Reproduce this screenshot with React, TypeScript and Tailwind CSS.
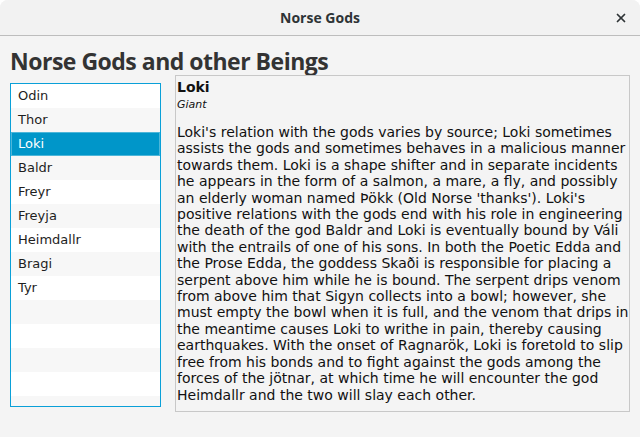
import { X } from 'lucide-react';

const gods = ['Odin', 'Thor', 'Loki', 'Baldr', 'Freyr', 'Freyja', 'Heimdallr', 'Bragi', 'Tyr'];

const lines = [
  "Loki's relation with the gods varies by source; Loki sometimes",
  'assists the gods and sometimes behaves in a malicious manner',
  'towards them. Loki is a shape shifter and in separate incidents',
  'he appears in the form of a salmon, a mare, a fly, and possibly',
  "an elderly woman named Þökk (Old Norse 'thanks'). Loki's",
  'positive relations with the gods end with his role in engineering',
  'the death of the god Baldr and Loki is eventually bound by Váli',
  'with the entrails of one of his sons. In both the Poetic Edda and',
  'the Prose Edda, the goddess Skaði is responsible for placing a',
  'serpent above him while he is bound. The serpent drips venom',
  'from above him that Sigyn collects into a bowl; however, she',
  'must empty the bowl when it is full, and the venom that drips in',
  'the meantime causes Loki to writhe in pain, thereby causing',
  'earthquakes. With the onset of Ragnarök, Loki is foretold to slip',
  'free from his bonds and to fight against the gods among the',
  'forces of the jötnar, at which time he will encounter the god',
  'Heimdallr and the two will slay each other.',
];

export default function App() {
  const rows = Array.from({ length: 14 }, (_, i) => gods[i] ?? '');

  return (
    <div className="w-[640px] h-[437px] bg-[#f4f4f4] rounded-t-[8px] overflow-hidden flex flex-col font-['DejaVu_Sans',sans-serif]">
      <div className="h-[36px] shrink-0 bg-[#f2f2f2] border-b border-[#bdbdbd] relative flex items-center justify-center">
        <span className="font-['Open_Sans',sans-serif] font-bold text-[14px] text-[#2e3436]">Norse Gods</span>
        <X className="absolute right-[12px] top-[11px] w-[14px] h-[14px] text-[#2e3436]" strokeWidth={3} />
      </div>

      <div className="px-[10px]">
        <div className="h-[39px] pt-[11px]">
          <h1 className="font-['Open_Sans',sans-serif] font-bold text-[23px] leading-[28px] text-[#333] tracking-[-0.5px]">
            Norse Gods and other Beings
          </h1>
        </div>

        <div className="flex items-start">
          <div className="mt-[8px] w-[151px] h-[324px] border border-[#0aa0d8] overflow-hidden">
            {rows.map((g, i) => {
              const selected = g === 'Loki';
              return (
                <div
                  key={i}
                  className={
                    selected
                      ? 'h-[24px] px-[6px] flex items-center text-[13px] text-white bg-[#0096c9] border border-[#4db6d9]'
                      : i % 2 === 1
                        ? 'h-[24px] px-[7px] flex items-center text-[13px] text-[#1e1e1e] bg-[#f7f7f7]'
                        : 'h-[24px] px-[7px] flex items-center text-[13px] text-[#1e1e1e] bg-white'
                  }
                >
                  {g}
                </div>
              );
            })}
          </div>

          <div className="ml-[14px] w-[455px] h-[337px] border border-[#c8c8c8] pl-[1px] pt-[1px] text-[#111]">
            <div className="font-bold text-[14px] leading-[21px]">Loki</div>
            <div className="italic text-[11px] leading-[13px]">Giant</div>
            <div className="h-[13px]" />
            <div className="text-[14px] leading-[16.4px]">
              {lines.map((l, i) => (
                <div key={i} className="whitespace-nowrap">{l}</div>
              ))}
            </div>
          </div>
        </div>
      </div>
    </div>
  );
}
